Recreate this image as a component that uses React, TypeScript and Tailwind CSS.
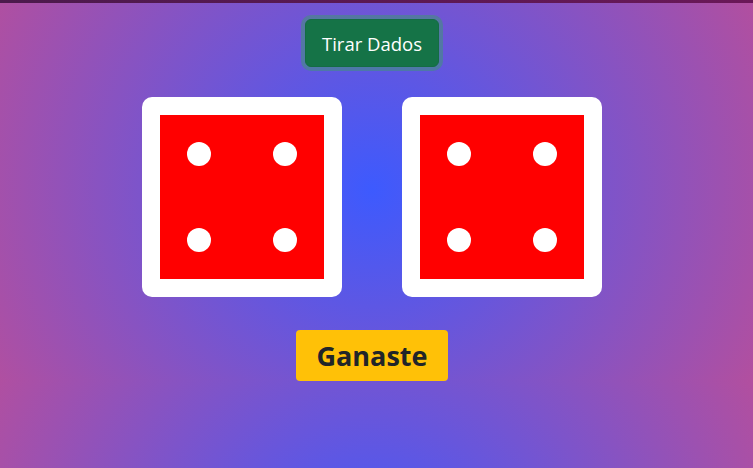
import React from "react";

const PIPS: Record<number, number[][]> = {
  4: [
    [1, 0, 1],
    [1, 0, 1],
  ],
};

function Die({ value }: { value: number }) {
  const rows = PIPS[value] ?? PIPS[4];
  return (
    <div className="size-[200px] rounded-[10px] bg-white p-[18px]">
      <div className="flex size-[164px] flex-col justify-between bg-[#ff0000] px-[27px] py-[27px]">
        {rows.map((row, i) => (
          <div key={i} className="flex justify-between">
            {row
              .filter((p) => p === 1)
              .map((_, j) => (
                <span key={j} className="block size-[24px] rounded-full bg-white" />
              ))}
          </div>
        ))}
      </div>
    </div>
  );
}

export default function App() {
  return (
    <div
      className="min-h-screen bg-[radial-gradient(circle_at_372px_190px,#3d5afe_0%,#b24f9f_100%)] bg-[length:100%_381px] bg-repeat"
      style={{ fontFamily: '"Open Sans", "Noto Sans", sans-serif' }}
    >
      {/* dark strip along the top edge */}
      <div className="h-[3px] bg-[linear-gradient(90deg,#4c1a4c,#6a1858)]" />

      <div className="flex flex-col items-center pt-[16px] pr-[9px]">
        <button
          type="button"
          className="flex h-[48px] w-[134px] items-center justify-center rounded-[6px] border border-[#146c43] bg-[#157347] pt-[2px] text-[18.5px] text-white shadow-[0_0_0_4px_rgba(60,153,110,0.5)]"
        >
          Tirar Dados
        </button>

        <div className="mt-[30px] flex gap-[60px]">
          <Die value={4} />
          <Die value={4} />
        </div>

        <div className="mt-[33px] flex h-[51px] w-[152px] items-center justify-center rounded-[4px] bg-[#ffc107] pt-[2px] text-[27px] font-bold text-[#212529]">
          Ganaste
        </div>
      </div>
    </div>
  );
}
